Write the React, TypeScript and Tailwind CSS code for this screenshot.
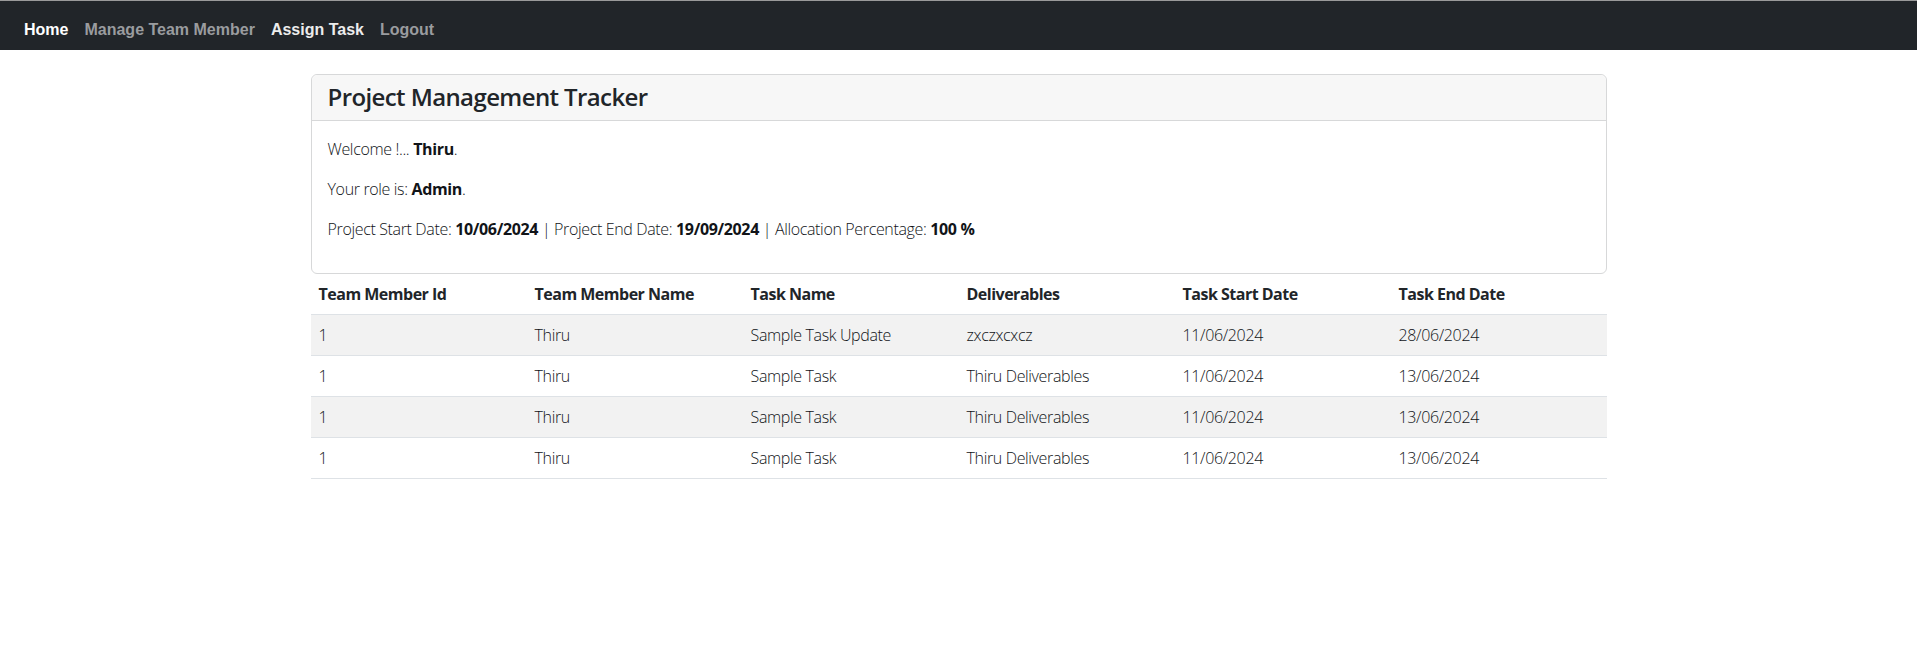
const tasks = [
  { id: 1, name: 'Thiru', task: 'Sample Task Update', deliverables: 'zxczxcxcz', start: '11/06/2024', end: '28/06/2024' },
  { id: 1, name: 'Thiru', task: 'Sample Task', deliverables: 'Thiru Deliverables', start: '11/06/2024', end: '13/06/2024' },
  { id: 1, name: 'Thiru', task: 'Sample Task', deliverables: 'Thiru Deliverables', start: '11/06/2024', end: '13/06/2024' },
  { id: 1, name: 'Thiru', task: 'Sample Task', deliverables: 'Thiru Deliverables', start: '11/06/2024', end: '13/06/2024' },
];

const headers = ['Team Member Id', 'Team Member Name', 'Task Name', 'Deliverables', 'Task Start Date', 'Task End Date'];

function NavBar() {
  return (
    <nav className="h-[50px] border-t border-[#9a9a9a] bg-[#212529] pt-[17px] pl-[16px] font-['Liberation_Sans',Arial,sans-serif] text-[16px] font-bold leading-6 tracking-normal">
      <ul className="flex">
        <li className="px-2 text-white">Home</li>
        <li className="px-2 text-[#9a9c9f]">Manage Team Member</li>
        <li className="px-2 text-[#ececec]">Assign Task</li>
        <li className="px-2 text-[#9a9c9f]">Logout</li>
      </ul>
    </nav>
  );
}

export default function App() {
  return (
    <div className="min-h-screen bg-white font-['Open_Sans',sans-serif] text-[16px] font-light leading-6 tracking-[-0.35px] text-[#111418]">
      <NavBar />

      <main className="mx-auto mt-6 w-[1296px]">
        {/* Summary card */}
        <div className="rounded-md border border-[#d7d8d9]">
          <div className="rounded-t-md border-b border-[#d7d8d9] bg-[#f7f7f7] px-4 py-2">
            <h2 className="text-[24px] font-semibold leading-[1.2] tracking-[-0.6px] text-[#212529]">
              Project Management Tracker
            </h2>
          </div>
          <div className="p-4">
            <p className="mb-4">
              Welcome !... <b className="font-bold">Thiru</b>.
            </p>
            <p className="mb-4">
              Your role is: <b className="font-bold">Admin</b>.
            </p>
            <p className="mb-4">
              Project Start Date: <b className="font-bold">10/06/2024</b> | Project End Date:{' '}
              <b className="font-bold">19/09/2024</b> | Allocation Percentage: <b className="font-bold">100 %</b>
            </p>
          </div>
        </div>

        {/* Task table */}
        <table className="w-full table-fixed border-collapse text-left">
          <thead>
            <tr className="border-b border-[#dee2e6]">
              {headers.map((h) => (
                <th key={h} className="p-2 font-bold tracking-[-0.5px] text-[#212529]">
                  {h}
                </th>
              ))}
            </tr>
          </thead>
          <tbody>
            {tasks.map((t, i) => (
              <tr key={i} className={`border-b border-[#dee2e6] ${i % 2 === 0 ? 'bg-[#f2f2f2]' : 'bg-white'}`}>
                <td className="p-2">{t.id}</td>
                <td className="p-2">{t.name}</td>
                <td className="p-2">{t.task}</td>
                <td className="p-2">{t.deliverables}</td>
                <td className="p-2">{t.start}</td>
                <td className="p-2">{t.end}</td>
              </tr>
            ))}
          </tbody>
        </table>
      </main>
    </div>
  );
}
